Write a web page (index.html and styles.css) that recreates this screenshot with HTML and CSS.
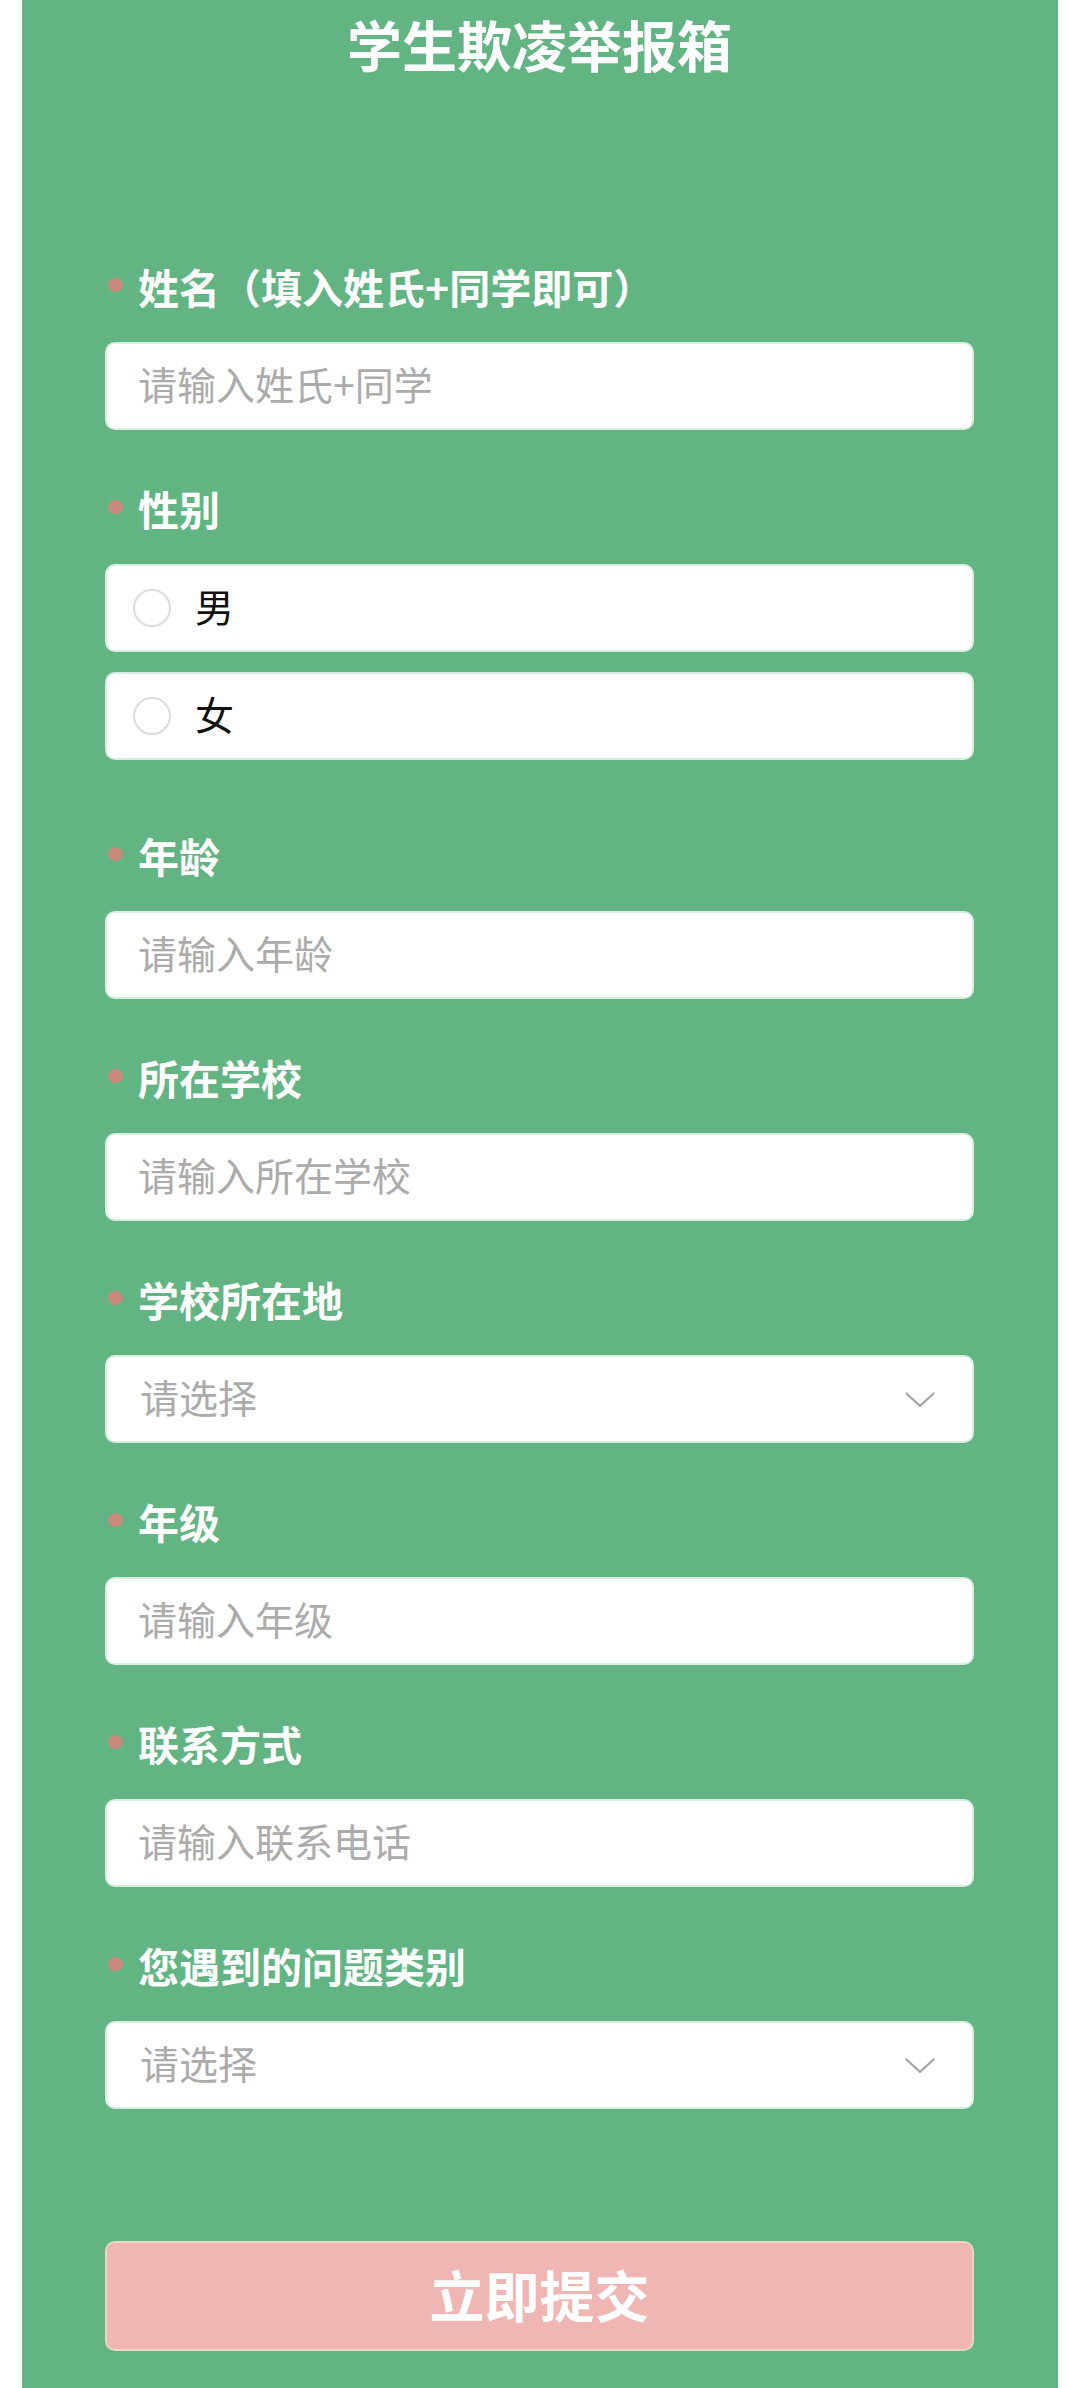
FILE: index.html
```html
<!DOCTYPE html>
<html lang="zh-CN">
<head>
<meta charset="utf-8">
<meta name="viewport" content="width=1080">
<title>学生欺凌举报箱</title>
<link rel="stylesheet" href="styles.css">
</head>
<body>
<div class="page">
  <h1 class="title">学生欺凌举报箱</h1>
  <form class="form">
    <div class="field">
      <div class="label">姓名（填入姓氏+同学即可）</div>
      <input class="input" type="text" placeholder="请输入姓氏+同学">
    </div>
    <div class="field field-radio">
      <div class="label">性别</div>
      <div class="options">
        <label class="option"><span class="radio"></span><span class="option-text">男</span></label>
        <label class="option"><span class="radio"></span><span class="option-text">女</span></label>
      </div>
    </div>
    <div class="field">
      <div class="label">年龄</div>
      <input class="input" type="text" placeholder="请输入年龄">
    </div>
    <div class="field">
      <div class="label">所在学校</div>
      <input class="input" type="text" placeholder="请输入所在学校">
    </div>
    <div class="field">
      <div class="label">学校所在地</div>
      <div class="select"><span class="select-text">请选择</span>
        <svg class="chevron" width="30" height="16" viewBox="0 0 30 16"><path d="M1.5 1.5 L15 14 L28.5 1.5" fill="none" stroke="#a3a3a3" stroke-width="2.2" stroke-linecap="round" stroke-linejoin="round"/></svg>
      </div>
    </div>
    <div class="field">
      <div class="label">年级</div>
      <input class="input" type="text" placeholder="请输入年级">
    </div>
    <div class="field">
      <div class="label">联系方式</div>
      <input class="input" type="text" placeholder="请输入联系电话">
    </div>
    <div class="field">
      <div class="label">您遇到的问题类别</div>
      <div class="select"><span class="select-text">请选择</span>
        <svg class="chevron" width="30" height="16" viewBox="0 0 30 16"><path d="M1.5 1.5 L15 14 L28.5 1.5" fill="none" stroke="#a3a3a3" stroke-width="2.2" stroke-linecap="round" stroke-linejoin="round"/></svg>
      </div>
    </div>
    <button class="submit" type="button">立即提交</button>
  </form>
</div>
</body>
</html>
```

FILE: styles.css
```css
html, body {
  margin: 0;
  padding: 0;
  background: #ffffff;
}

body {
  font-family: "Noto Sans CJK SC", "Noto Sans", sans-serif;
}

.page {
  box-sizing: border-box;
  margin: 0 22px;
  min-height: 2388px;
  background: #62b583;
  padding: 0 84px 0 83px;
}

.title {
  margin: 0;
  height: 86px;
  line-height: 86px;
  text-align: center;
  font-size: 55px;
  font-weight: 700;
  color: #ffffff;
}

.form {
  display: flex;
  flex-direction: column;
  padding-top: 174px;
}

.field {
  display: flex;
  flex-direction: column;
  margin-bottom: 52px;
}

.field-radio {
  margin-bottom: 69px;
}

.label {
  position: relative;
  height: 56px;
  line-height: 52px;
  padding-left: 33px;
  margin-bottom: 26px;
  font-size: 41px;
  font-weight: 700;
  color: #ffffff;
  white-space: nowrap;
}

.label::before {
  content: "";
  position: absolute;
  left: 3px;
  top: 18px;
  width: 15px;
  height: 14px;
  border-radius: 50%;
  background: #c98a7c;
}

.input,
.select {
  box-sizing: border-box;
  height: 88px;
  width: 100%;
  border: 2px solid #d8eee1;
  border-radius: 10px;
  background: #ffffff;
  font-family: "Noto Sans CJK SC", "Noto Sans", sans-serif;
  font-size: 39px;
  color: #222222;
  outline: none;
}

.input {
  display: block;
  padding: 0 31px 7px;
  margin: 0;
}

.input::placeholder {
  color: #ababab;
}

.select {
  display: flex;
  align-items: center;
  justify-content: space-between;
  padding: 0 37px 7px 33px;
}

.select-text {
  color: #ababab;
}

.chevron {
  display: block;
  margin-top: 9px;
}

.options {
  display: flex;
  flex-direction: column;
  gap: 20px;
}

.option {
  box-sizing: border-box;
  display: flex;
  align-items: center;
  height: 88px;
  padding-left: 26px;
  border: 2px solid #d8eee1;
  border-radius: 10px;
  background: #ffffff;
}

.radio {
  box-sizing: border-box;
  width: 38px;
  height: 38px;
  border: 2px solid #dcdcdc;
  border-radius: 50%;
  flex: none;
}

.option-text {
  margin-left: 24px;
  margin-top: -6px;
  font-size: 39px;
  color: #111111;
}

.submit {
  box-sizing: border-box;
  margin-top: 80px;
  height: 110px;
  width: 100%;
  border: 2px solid #e6d6c4;
  border-radius: 10px;
  background: #f0b6b4;
  color: #ffffff;
  font-family: "Noto Sans CJK SC", "Noto Sans", sans-serif;
  font-size: 55px;
  font-weight: 700;
  padding: 0 0 6px;
}
```
